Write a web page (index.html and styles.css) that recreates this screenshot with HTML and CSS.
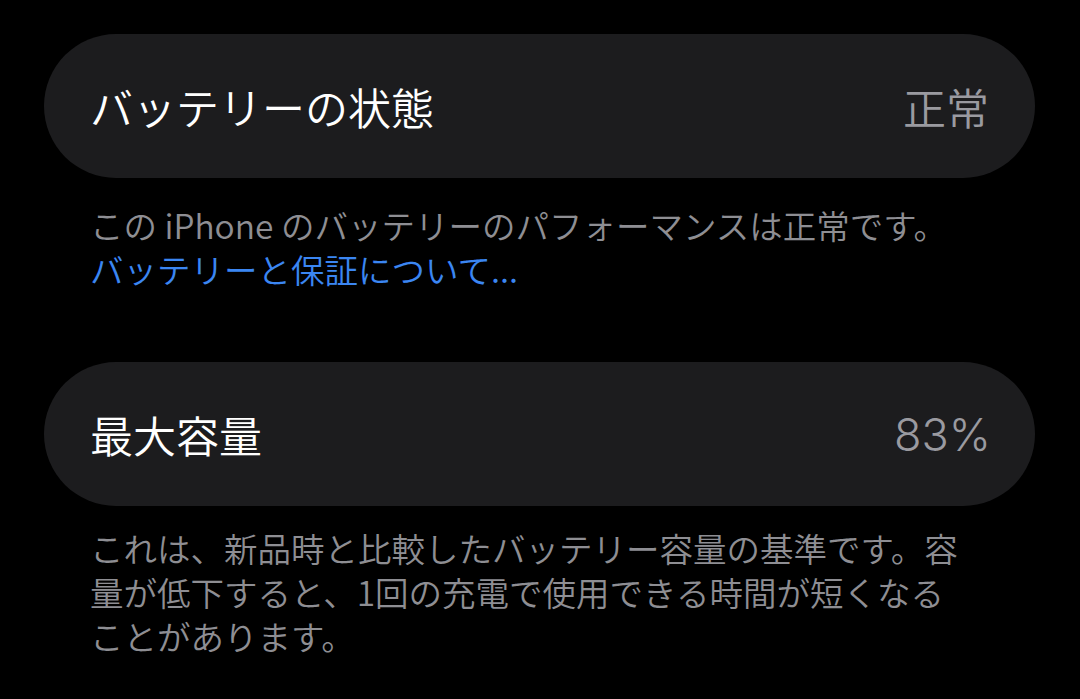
FILE: index.html
```html
<!DOCTYPE html>
<html lang="ja">

<head>
  <meta charset="UTF-8">
  <meta name="viewport" content="width=device-width, initial-scale=1.0">
  <title>バッテリーの状態</title>
  <link rel="stylesheet" href="styles.css">
</head>

<body>
  <div class="container">
    <!-- 状態 -->
    <div class="cell">
      <div class="label">バッテリーの状態</div>
      <div class="value">正常</div>
    </div>
    <div class="footnote footnote-first">
      <p>この iPhone のバッテリーのパフォーマンスは正常です。</p>
      <a class="link" href="#">バッテリーと保証について...</a>
    </div>

    <!-- 最大容量 -->
    <div class="cell cell-second">
      <div class="label">最大容量</div>
      <div class="value value-num">83%</div>
    </div>
    <div class="footnote footnote-second">
      <p>これは、新品時と比較したバッテリー容量の基準です。容量が低下すると、1回の充電で使用できる時間が短くなることがあります。</p>
    </div>
  </div>
</body>

</html>
```

FILE: styles.css
```css
* {
  margin: 0;
  padding: 0;
  box-sizing: border-box;
}

html,
body {
  background: #000;
}

body {
  font-family: "Noto Sans CJK JP", "Noto Sans", sans-serif;
  color: #fff;
  height: 699px;
  overflow: hidden;
}

.container {
  padding: 34px 45px 0 44px;
}

.cell {
  height: 144px;
  border-radius: 72px;
  background: #1c1c1e;
  padding: 0 46px 0 46px;
  display: flex;
  align-items: center;
  justify-content: space-between;
}

.cell-second {
  margin-top: 71px;
}

.label {
  font-size: 43px;
  font-weight: 350;
  line-height: 1;
  color: #fff;
}

.value {
  font-size: 43px;
  font-weight: 350;
  line-height: 1;
  color: #9a9aa0;
}

/* 数字は SF っぽく Inter で */
.value-num {
  font-family: "Inter", "Noto Sans CJK JP", sans-serif;
  font-size: 45px;
  font-weight: 300;
  margin-right: -2px;
}

.footnote {
  width: 926px;
  padding-left: 46px;
  font-size: 33.5px;
  font-weight: 350;
  line-height: 44px;
  color: #8e8e93;
}

.footnote p,
.link {
  line-height: 44px;
}

.footnote-first {
  margin-top: 25px;
}

.footnote-second {
  margin-top: 20px;
}

.link {
  display: block;
  color: #3b86f2;
  text-decoration: none;
}
```
